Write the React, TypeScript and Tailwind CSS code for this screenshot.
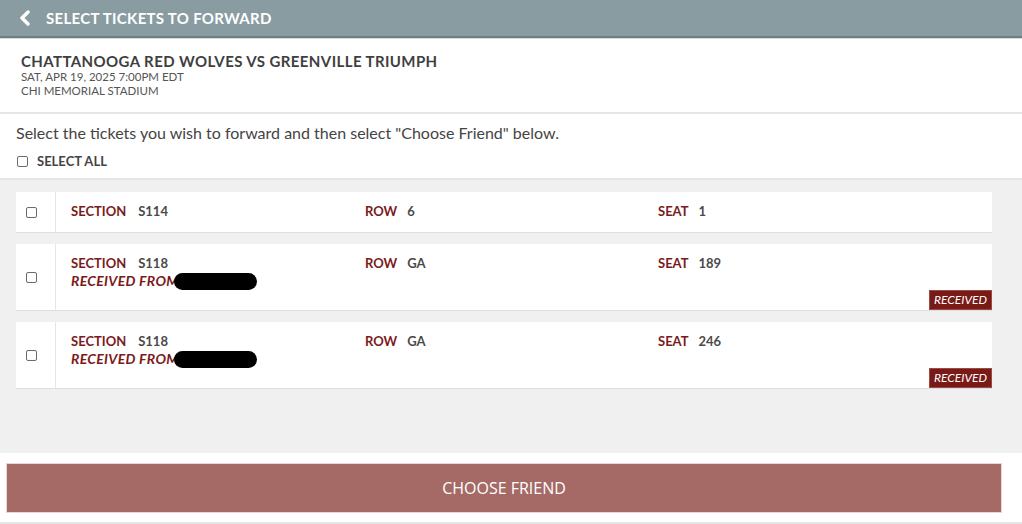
import { useState } from "react";

type Ticket = {
  id: number;
  section: string;
  row: string;
  seat: string;
  received?: boolean;
};

const TICKETS: Ticket[] = [
  { id: 1, section: "S114", row: "6", seat: "1" },
  { id: 2, section: "S118", row: "GA", seat: "189", received: true },
  { id: 3, section: "S118", row: "GA", seat: "246", received: true },
];

function Box({ checked, onClick }: { checked: boolean; onClick: () => void }) {
  return (
    <button
      onClick={onClick}
      className={`w-[11px] h-[11px] rounded-[2px] border border-[#6b6b6b] ${checked ? "bg-[#7a1b1b]" : "bg-white"}`}
    />
  );
}

function TicketCard({ t, checked, toggle }: { t: Ticket; checked: boolean; toggle: () => void }) {
  return (
    <div className={`flex bg-white shadow-[0_1px_0_#dedede] ${t.received ? "h-[66px]" : "h-[40px]"}`}>
      <div className="w-[40px] border-r border-[#e6e6e6] flex items-center pl-[10px]">
        <Box checked={checked} onClick={toggle} />
      </div>
      <div className="flex-1 relative pl-[15px] pt-[10px] text-[13px] font-bold leading-[18px]">
        <div className="flex">
          <div className="w-[294px]">
            <span className="text-[#7a1b1b]">SECTION</span>
            <span className="text-[#4a4a4a] ml-[12px]">{t.section}</span>
          </div>
          <div className="w-[293px]">
            <span className="text-[#7a1b1b]">ROW</span>
            <span className="text-[#4a4a4a] ml-[10px]">{t.row}</span>
          </div>
          <div>
            <span className="text-[#7a1b1b]">SEAT</span>
            <span className="text-[#4a4a4a] ml-[10px]">{t.seat}</span>
          </div>
        </div>
        {t.received && (
          <div className="flex items-center italic text-[#7a1b1b] text-[14px] tracking-[0.3px]">
            RECEIVED FROM
            <span className="inline-block w-[83px] h-[17px] rounded-full bg-black -ml-[5px]" />
          </div>
        )}
        {t.received && (
          <div className="absolute right-0 bottom-0 bg-[#7a1a17] text-white italic font-normal text-[12px] leading-[18px] px-[4px] border border-[#9a4a47]">
            RECEIVED
          </div>
        )}
      </div>
    </div>
  );
}

export default function App() {
  const [selected, setSelected] = useState<number[]>([]);
  const allChecked = selected.length === TICKETS.length;

  const toggle = (id: number) => {
    setSelected(s => (s.includes(id) ? s.filter(x => x !== id) : [...s, id]));
  };

  return (
    <div className="w-[1022px] h-[524px] bg-white flex flex-col font-['Lato','Liberation_Sans',sans-serif] overflow-hidden">
      <div className="h-[38px] bg-[#889ca2] border-b-[2px] border-[#6c8086] flex items-center pl-[18px] shrink-0">
        <svg width="14" height="16" viewBox="0 0 14 16" className="mr-[14px]">
          <path d="M10 2 L4 8 L10 14" stroke="white" strokeWidth="3.5" fill="none" strokeLinecap="round" strokeLinejoin="round" />
        </svg>
        <span className="text-white font-bold text-[15px] tracking-[0.3px]">SELECT TICKETS TO FORWARD</span>
      </div>

      <div className="h-[76px] shrink-0 border-t border-[#d5dcde] border-b-[2px] border-b-[#e5e5e5] pl-[21px] pt-[13px]">
        <div className="text-[15px] font-bold text-[#3f3f3f] leading-[18px] tracking-[0.4px]">CHATTANOOGA RED WOLVES VS GREENVILLE TRIUMPH</div>
        <div className="text-[11.5px] text-[#555] leading-[14px]">SAT, APR 19, 2025 7:00PM EDT</div>
        <div className="text-[11.5px] text-[#555] leading-[14px]">CHI MEMORIAL STADIUM</div>
      </div>

      <div className="h-[66px] shrink-0 pl-[16px] pt-[10px] border-b-[2px] border-[#e5e5e5]">
        <div className="text-[16px] text-[#444] leading-[18px]">
          Select the tickets you wish to forward and then select "Choose Friend" below.
        </div>
        <div className="flex items-center mt-[10px] gap-[9px] pl-[1px]">
          <Box checked={allChecked} onClick={() => setSelected(allChecked ? [] : TICKETS.map(t => t.id))} />
          <span className="text-[13px] font-bold text-[#444]">SELECT ALL</span>
        </div>
      </div>

      <div className="h-[273px] shrink-0 bg-[#f0f0f0] pl-[16px] pr-[30px] pt-[12px] flex flex-col gap-[12px]">
        {TICKETS.map(t => (
          <TicketCard key={t.id} t={t} checked={selected.includes(t.id)} toggle={() => toggle(t.id)} />
        ))}
      </div>

      <div className="flex-1 pt-[10px] px-[6px] border-b-[2px] border-[#e5e5e5]">
        <button className="w-[996px] h-[50px] bg-[#a56a65] text-white text-[16px] font-['Open_Sans',sans-serif] border border-[#ecd6d4]">
          CHOOSE FRIEND
        </button>
      </div>
    </div>
  );
}
